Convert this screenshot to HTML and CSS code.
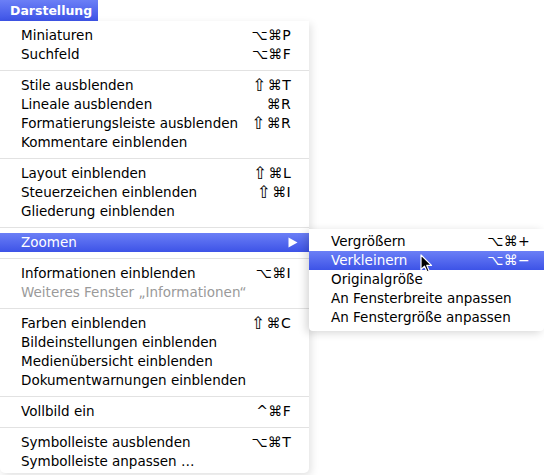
FILE: index.html
```html
<!DOCTYPE html>
<html lang="de">
<head>
<meta charset="utf-8">
<title>Darstellung</title>
<link rel="stylesheet" href="styles.css">
</head>
<body>
<div class="screen">
  <div class="menubar-title">Darstellung</div>
  <div class="menu">
    <div class="item"><span>Miniaturen</span><span class="key">⌥⌘P</span></div>
    <div class="item"><span>Suchfeld</span><span class="key">⌥⌘F</span></div>
    <div class="sep"></div>
    <div class="item"><span>Stile ausblenden</span><span class="key"><span class="shift">⇧</span>⌘T</span></div>
    <div class="item"><span>Lineale ausblenden</span><span class="key">⌘R</span></div>
    <div class="item"><span>Formatierungsleiste ausblenden</span><span class="key"><span class="shift">⇧</span>⌘R</span></div>
    <div class="item"><span>Kommentare einblenden</span></div>
    <div class="sep"></div>
    <div class="item"><span>Layout einblenden</span><span class="key"><span class="shift">⇧</span>⌘L</span></div>
    <div class="item"><span>Steuerzeichen einblenden</span><span class="key"><span class="shift">⇧</span>⌘I</span></div>
    <div class="item"><span>Gliederung einblenden</span></div>
    <div class="sep"></div>
    <div class="item selected has-sub">
      <span>Zoomen</span>
      <svg class="arrow" width="10" height="11" viewBox="0 0 10 11"><polygon points="0.5,0.5 9.5,5.5 0.5,10.5" fill="#fff"/></svg>
      <div class="submenu">
        <div class="item"><span>Vergrößern</span><span class="key">⌥⌘+</span></div>
        <div class="item selected"><span>Verkleinern</span><span class="key">⌥⌘−</span></div>
        <div class="item"><span>Originalgröße</span></div>
        <div class="item"><span>An Fensterbreite anpassen</span></div>
        <div class="item"><span>An Fenstergröße anpassen</span></div>
        <svg class="cursor" width="13" height="19" viewBox="0 0 13 19"><path d="M1 1 L1 15.5 L4.5 12.2 L7 17.8 L9.2 16.9 L6.8 11.4 L11.5 11.4 Z" fill="#000" stroke="#fff" stroke-width="1.2" stroke-linejoin="round"/></svg>
      </div>
    </div>
    <div class="sep"></div>
    <div class="item"><span>Informationen einblenden</span><span class="key">⌥⌘I</span></div>
    <div class="item disabled"><span>Weiteres Fenster „Informationen“</span></div>
    <div class="sep"></div>
    <div class="item"><span>Farben einblenden</span><span class="key"><span class="shift">⇧</span>⌘C</span></div>
    <div class="item"><span>Bildeinstellungen einblenden</span></div>
    <div class="item"><span>Medienübersicht einblenden</span></div>
    <div class="item"><span>Dokumentwarnungen einblenden</span></div>
    <div class="sep"></div>
    <div class="item"><span>Vollbild ein</span><span class="key">^⌘F</span></div>
    <div class="sep"></div>
    <div class="item"><span>Symbolleiste ausblenden</span><span class="key">⌥⌘T</span></div>
    <div class="item"><span>Symbolleiste anpassen …</span></div>
  </div>
</div>
</body>
</html>
```

FILE: styles.css
```css
html, body {
  margin: 0;
  padding: 0;
  background: #ffffff;
}

.screen {
  width: 544px;
  height: 475px;
  overflow: hidden;
  font-family: "DejaVu Sans", "Liberation Sans", sans-serif;
  font-size: 13.5px;
  color: #000;
}

.menubar-title {
  width: 98px;
  height: 21px;
  box-sizing: border-box;
  padding-left: 10px;
  line-height: 21px;
  font-size: 12.5px;
  font-weight: bold;
  color: #fff;
  background: linear-gradient(#6b7ff6, #3d53e7);
}

.menu {
  width: 309px;
  box-sizing: border-box;
  padding: 5px 0 2px;
  background: #fff;
  display: flex;
  flex-direction: column;
  border-radius: 0 0 5px 5px;
  box-shadow: 2px 3px 8px rgba(0, 0, 0, 0.12);
}

.item {
  position: relative;
  height: 19px;
  line-height: 19px;
  padding: 0 18px 0 21px;
  display: flex;
  justify-content: space-between;
  align-items: center;
  white-space: nowrap;
}

.key {
  font-size: 14px;
  letter-spacing: 0.3px;
  display: flex;
  align-items: center;
}

.shift {
  font-size: 17px;
  line-height: 19px;
  margin-right: 1px;
}

.selected {
  color: #fff;
  background: linear-gradient(#6b7ff6, #3d53e7);
}

.disabled {
  color: #9a9a9a;
}

.has-sub {
  padding-right: 11px;
}

.arrow {
  display: block;
}

.sep {
  height: 12px;
  display: flex;
  align-items: center;
}

.sep::before {
  content: "";
  display: block;
  width: 100%;
  height: 1px;
  background: #e2e2e2;
}

.submenu {
  position: absolute;
  left: 309px;
  top: -4px;
  width: 235px;
  box-sizing: border-box;
  padding: 3px 0 4px;
  background: #fff;
  color: #000;
  display: flex;
  flex-direction: column;
  border-radius: 0 0 4px 4px;
  box-shadow: -3px 2px 8px rgba(0, 0, 0, 0.16);
}

.submenu .item {
  padding: 0 14px 0 22px;
}

.submenu .selected {
  color: #fff;
}

.cursor {
  position: absolute;
  left: 111px;
  top: 25px;
}
```
